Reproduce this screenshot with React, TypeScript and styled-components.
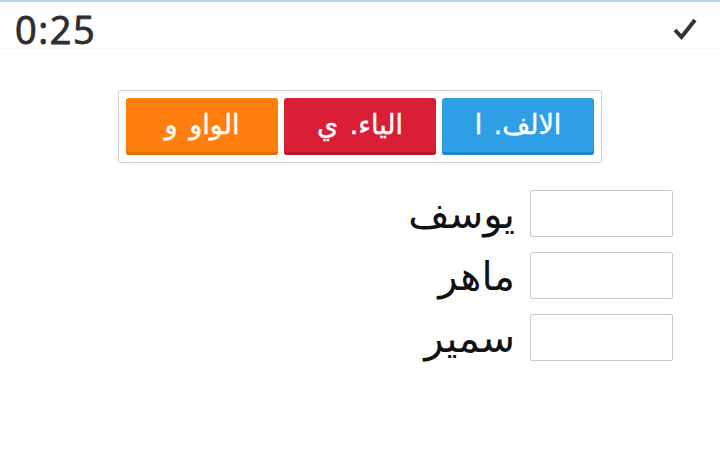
import React from "react";
import styled, { createGlobalStyle } from "styled-components";

const Global = createGlobalStyle`
  html, body { margin: 0; padding: 0; background: #ffffff; }
  body { font-family: "Open Sans", "DejaVu Sans", sans-serif; }
`;

const Page = styled.div`
  width: 720px;
  height: 465px;
  box-sizing: border-box;
  border-top: 2px solid #b3d9ea;
  display: flex;
  flex-direction: column;
  overflow: hidden;
`;

const Header = styled.header`
  height: 46px;
  display: flex;
  align-items: center;
  justify-content: space-between;
  padding: 0 22px 0 15px;
  border-bottom: 1px solid #f6f6f6;
`;

const Timer = styled.div`
  font-family: "Open Sans", sans-serif;
  font-size: 38px;
  font-weight: 400;
  -webkit-text-stroke: 0.9px #2e2e2e;
  color: #2e2e2e;
  letter-spacing: 1.5px;
  line-height: 1;
  margin-top: 7px;
`;

const CheckIcon = styled.svg`
  width: 26px;
  height: 22px;
  margin-top: 8px;
`;

const ButtonFrame = styled.div`
  direction: rtl;
  align-self: center;
  margin-top: 41px;
  display: flex;
  gap: 6px;
  padding: 7px;
  border: 1px solid #cfcfcf;
  border-radius: 3px;
  background: #fff;
`;

const SoundButton = styled.button<{ $bg: string; $shade: string }>`
  width: 152px;
  height: 57px;
  border: none;
  border-radius: 3px;
  background: ${(p) => p.$bg};
  box-shadow: inset 0 -3px 0 ${(p) => p.$shade};
  color: #ffffff;
  -webkit-text-stroke: 0.4px #ffffff;
  font-family: "DejaVu Sans", sans-serif;
  font-size: 27px;
  word-spacing: 3px;
  padding: 0 0 5px;
  display: flex;
  align-items: center;
  justify-content: center;
`;

const Rows = styled.div`
  direction: rtl;
  margin-top: 27px;
  padding-right: 47px;
  display: flex;
  flex-direction: column;
  gap: 15px;
`;

const Row = styled.div`
  display: flex;
  align-items: center;
  gap: 15px;
  height: 47px;
`;

const AnswerBox = styled.input`
  width: 143px;
  height: 47px;
  box-sizing: border-box;
  border: 1px solid #c8c8c8;
  border-radius: 2px;
  background: #fff;
  margin: 0;
`;

const Name = styled.span`
  font-family: "DejaVu Sans", sans-serif;
  font-size: 40px;
  color: #111;
  line-height: 1;
`;

const buttons = [
  { label: "الالف. ا", bg: "#2e9fe5", shade: "#2288cf" },
  { label: "الياء. ي", bg: "#d91e36", shade: "#b8162b" },
  { label: "الواو و", bg: "#ff7f0e", shade: "#e46c06" },
];

const names = ["يوسف", "ماهر", "سمير"];

export default function App() {
  return (
    <>
      <Global />
      <Page>
        <Header>
          <Timer>0:25</Timer>
          <CheckIcon viewBox="0 0 26 22">
            <path d="M3 12 L9.5 19 L23 2" fill="none" stroke="#333" strokeWidth="4" strokeLinejoin="miter" />
          </CheckIcon>
        </Header>
        <ButtonFrame>
          {buttons.map((b) => (
            <SoundButton key={b.label} $bg={b.bg} $shade={b.shade}>
              {b.label}
            </SoundButton>
          ))}
        </ButtonFrame>
        <Rows>
          {names.map((n) => (
            <Row key={n}>
              <AnswerBox />
              <Name>{n}</Name>
            </Row>
          ))}
        </Rows>
      </Page>
    </>
  );
}
